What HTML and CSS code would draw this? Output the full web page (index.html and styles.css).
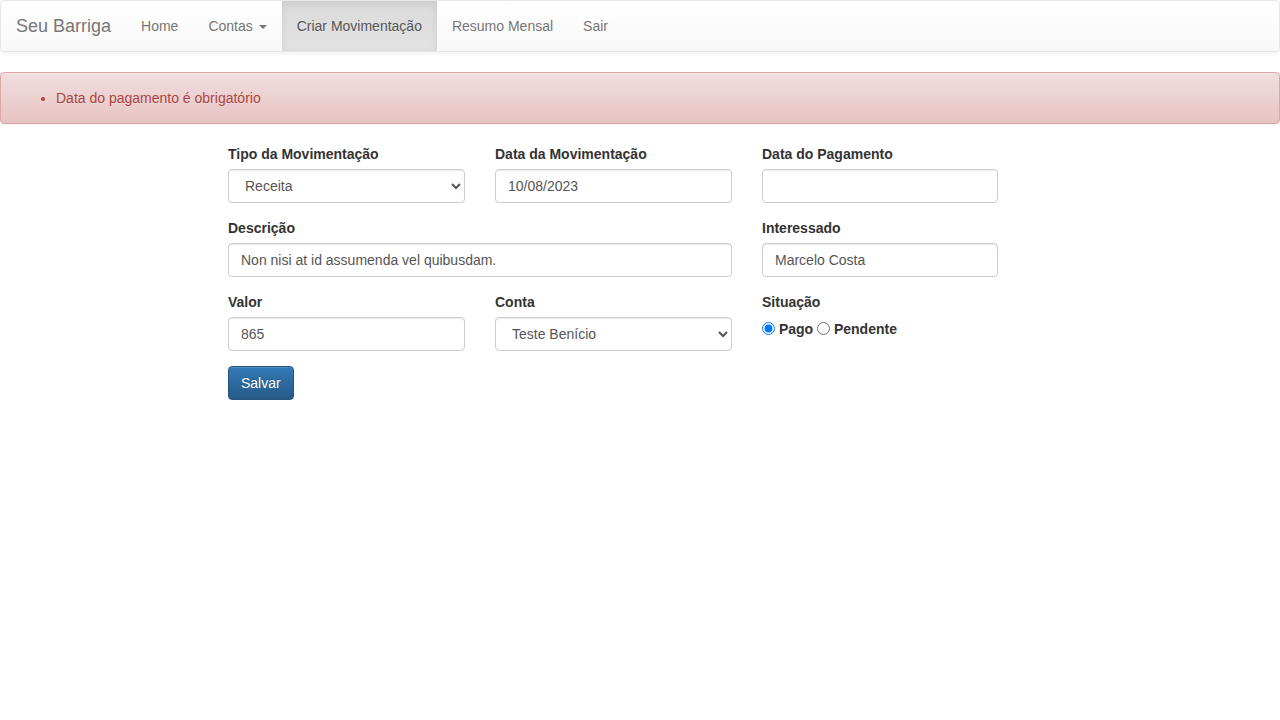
FILE: index.html
```html
<!DOCTYPE html>
<html lang="pt-BR">
<head>
<meta charset="utf-8">
<title>Seu Barriga</title>
<link rel="stylesheet" href="styles.css">
</head>
<body>
<nav class="navbar">
  <a class="brand" href="#">Seu Barriga</a>
  <ul class="nav">
    <li><a href="#">Home</a></li>
    <li><a href="#">Contas <span class="caret"></span></a></li>
    <li class="active"><a href="#">Criar Movimentação</a></li>
    <li><a href="#">Resumo Mensal</a></li>
    <li><a href="#">Sair</a></li>
  </ul>
</nav>
<div class="alert">
  <ul>
    <li>Data do pagamento é obrigatório</li>
  </ul>
</div>
<form class="mov-form">
  <div class="grid">
    <div class="form-group">
      <label class="ctl-label">Tipo da Movimentação</label>
      <select class="form-control"><option>Receita</option><option>Despesa</option></select>
    </div>
    <div class="form-group">
      <label class="ctl-label">Data da Movimentação</label>
      <input class="form-control" type="text" value="10/08/2023">
    </div>
    <div class="form-group">
      <label class="ctl-label">Data do Pagamento</label>
      <input class="form-control" type="text" value="">
    </div>
    <div class="form-group span2">
      <label class="ctl-label">Descrição</label>
      <input class="form-control" type="text" value="Non nisi at id assumenda vel quibusdam.">
    </div>
    <div class="form-group">
      <label class="ctl-label">Interessado</label>
      <input class="form-control" type="text" value="Marcelo Costa">
    </div>
    <div class="form-group">
      <label class="ctl-label">Valor</label>
      <input class="form-control" type="text" value="865">
    </div>
    <div class="form-group">
      <label class="ctl-label">Conta</label>
      <select class="form-control"><option>Teste Benício</option></select>
    </div>
    <div class="form-group">
      <label class="ctl-label">Situação</label>
      <div class="radios"><input type="radio" name="sit" checked> Pago <input type="radio" name="sit"> Pendente</div>
    </div>
  </div>
  <button type="button" class="btn">Salvar</button>
</form>
</body>
</html>
```
FILE: styles.css
```css
* { box-sizing: border-box; }
html, body { margin: 0; padding: 0; }
body {
  font-family: "Liberation Sans", Arial, Helvetica, sans-serif;
  font-size: 14px;
  line-height: 1.42857143;
  color: #333;
  background: #fff;
}
a { text-decoration: none; }

.navbar {
  display: flex;
  align-items: stretch;
  height: 52px;
  border: 1px solid #e7e7e7;
  border-radius: 4px;
  background: linear-gradient(to bottom, #fff 0%, #f8f8f8 100%);
  box-shadow: inset 0 1px 0 rgba(255,255,255,.15), 0 1px 5px rgba(0,0,0,.075);
  margin-bottom: 20px;
}
.brand {
  display: block;
  height: 50px;
  padding: 15px 15px;
  font-size: 18px;
  line-height: 20px;
  color: #777;
  text-shadow: 0 1px 0 rgba(255,255,255,.25);
}
.nav {
  display: flex;
  list-style: none;
  margin: 0;
  padding: 0;
}
.nav li a {
  display: block;
  padding: 15px;
  line-height: 20px;
  color: #777;
  text-shadow: 0 1px 0 rgba(255,255,255,.25);
}
.nav li.active a {
  color: #555;
  background: linear-gradient(to bottom, #dbdbdb 0%, #e2e2e2 100%);
  box-shadow: inset 0 3px 9px rgba(0,0,0,.075);
}
.caret {
  display: inline-block;
  width: 0;
  height: 0;
  margin-left: 2px;
  vertical-align: middle;
  border-top: 4px dashed;
  border-right: 4px solid transparent;
  border-left: 4px solid transparent;
}

.alert {
  padding: 15px;
  margin-bottom: 20px;
  border: 1px solid #dca7a7;
  border-radius: 4px;
  color: #a94442;
  background: linear-gradient(to bottom, #f2dede 0%, #e7c3c3 100%);
  text-shadow: 0 1px 0 rgba(255,255,255,.2);
  box-shadow: inset 0 1px 0 rgba(255,255,255,.25), 0 1px 2px rgba(0,0,0,.05);
}
.alert ul { margin: 0; padding-left: 40px; }

.mov-form { margin-left: 228px; width: 770px; }
.grid {
  display: grid;
  grid-template-columns: 237px 237px 236px;
  column-gap: 30px;
}
.span2 { grid-column: span 2; }
.form-group { margin-bottom: 15px; }
.ctl-label {
  display: inline-block;
  margin-bottom: 5px;
  font-weight: bold;
  max-width: 100%;
}
.form-control {
  display: block;
  width: 100%;
  height: 34px;
  padding: 6px 12px;
  font-family: inherit;
  font-size: 14px;
  line-height: 1.42857143;
  color: #555;
  background-color: #fff;
  border: 1px solid #ccc;
  border-radius: 4px;
  box-shadow: inset 0 1px 1px rgba(0,0,0,.075);
  margin: 0;
}
.radios { font-weight: bold; line-height: 20px; padding-top: 2px; }
.radios input { margin: 3px 0 0; vertical-align: top; }

.btn {
  display: inline-block;
  padding: 6px 12px;
  font-family: inherit;
  font-size: 14px;
  line-height: 1.42857143;
  color: #fff;
  border: 1px solid #245580;
  border-radius: 4px;
  background: linear-gradient(to bottom, #337ab7 0%, #265a88 100%);
  text-shadow: 0 -1px 0 rgba(0,0,0,.2);
  box-shadow: inset 0 1px 0 rgba(255,255,255,.15), 0 1px 1px rgba(0,0,0,.075);
  cursor: pointer;
}
```
